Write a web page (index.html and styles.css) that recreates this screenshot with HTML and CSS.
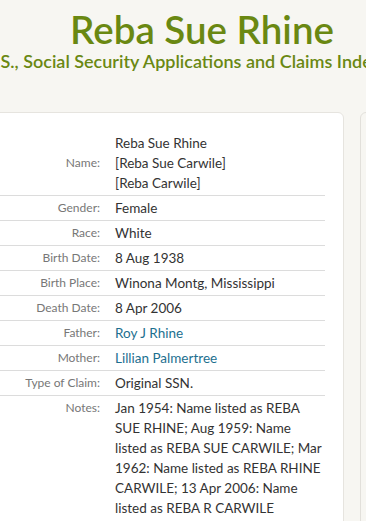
FILE: index.html
```html
<!DOCTYPE html>
<html lang="en">
<head>
    <meta charset="UTF-8">
    <meta name="viewport" content="width=device-width, initial-scale=1.0">
    <title>Reba Sue Rhine</title>
    <link rel="stylesheet" href="styles.css">
</head>
<body>
    <div class="page">
        <header class="record-head">
            <h1>Reba Sue Rhine</h1>
            <p class="collection">U.S., Social Security Applications and Claims Index</p>
        </header>

        <div class="columns">
            <section class="card">
                <table class="facts">
                    <tr>
                        <th>Name:</th>
                        <td>Reba Sue Rhine<br>[Reba Sue Carwile]<br>[Reba Carwile]</td>
                    </tr>
                    <tr>
                        <th>Gender:</th>
                        <td>Female</td>
                    </tr>
                    <tr>
                        <th>Race:</th>
                        <td>White</td>
                    </tr>
                    <tr>
                        <th>Birth Date:</th>
                        <td>8 Aug 1938</td>
                    </tr>
                    <tr>
                        <th>Birth Place:</th>
                        <td>Winona Montg, Mississippi</td>
                    </tr>
                    <tr>
                        <th>Death Date:</th>
                        <td>8 Apr 2006</td>
                    </tr>
                    <tr>
                        <th>Father:</th>
                        <td><a href="#">Roy J Rhine</a></td>
                    </tr>
                    <tr>
                        <th>Mother:</th>
                        <td><a href="#">Lillian Palmertree</a></td>
                    </tr>
                    <tr>
                        <th>Type of Claim:</th>
                        <td>Original SSN.</td>
                    </tr>
                    <tr class="notes">
                        <th>Notes:</th>
                        <td>Jan 1954: Name listed as REBA SUE RHINE; Aug 1959: Name listed as REBA SUE CARWILE; Mar 1962: Name listed as REBA RHINE CARWILE; 13 Apr 2006: Name listed as REBA R CARWILE</td>
                    </tr>
                </table>
            </section>
            <aside class="side"></aside>
        </div>
    </div>
</body>
</html>
```

FILE: styles.css
```css
html, body {
    overflow: hidden;
}
* {
    box-sizing: border-box;
}
body {
    margin: 0;
    background-color: #f7f6f2;
    font-family: "Lato", "Open Sans", sans-serif;
    color: #333;
}
.page {
    width: 500px;
    margin-left: -48px;
}
.record-head {
    text-align: center;
    padding-top: 7px;
}
.record-head h1 {
    margin: 0;
    font-size: 38.5px;
    line-height: 44px;
    font-weight: 600;
    color: #6a8812;
}
.collection {
    margin: 0 0 0 -40px;
    font-size: 18px;
    line-height: 20px;
    font-weight: 600;
    color: #6a8812;
    white-space: nowrap;
}
.columns {
    display: flex;
    gap: 16px;
    margin-top: 41px;
    padding-left: 20px;
}
.card {
    width: 372px;
    flex-shrink: 0;
    background: #fff;
    border: 1px solid #e6e4df;
    border-radius: 6px;
    padding: 18px 18px 0 0;
    min-height: 420px;
}
.side {
    flex: 1;
    border: 1px solid #e2e0db;
    border-radius: 6px;
    min-height: 420px;
}
.facts {
    width: 100%;
    border-collapse: collapse;
}
.facts tr + tr {
    border-top: 1px solid #dcdcdc;
}
.facts th {
    width: 142px;
    padding: 2px 15px 2px 0;
    text-align: right;
    font-weight: normal;
    font-size: 12px;
    line-height: 20px;
    color: #777;
    vertical-align: middle;
    white-space: nowrap;
}
.facts td {
    padding: 2px 0;
    font-size: 13.5px;
    line-height: 20px;
    color: #333;
}
.facts .notes th {
    vertical-align: top;
}
.facts a {
    color: #1d6f8f;
    text-decoration: none;
}
```
